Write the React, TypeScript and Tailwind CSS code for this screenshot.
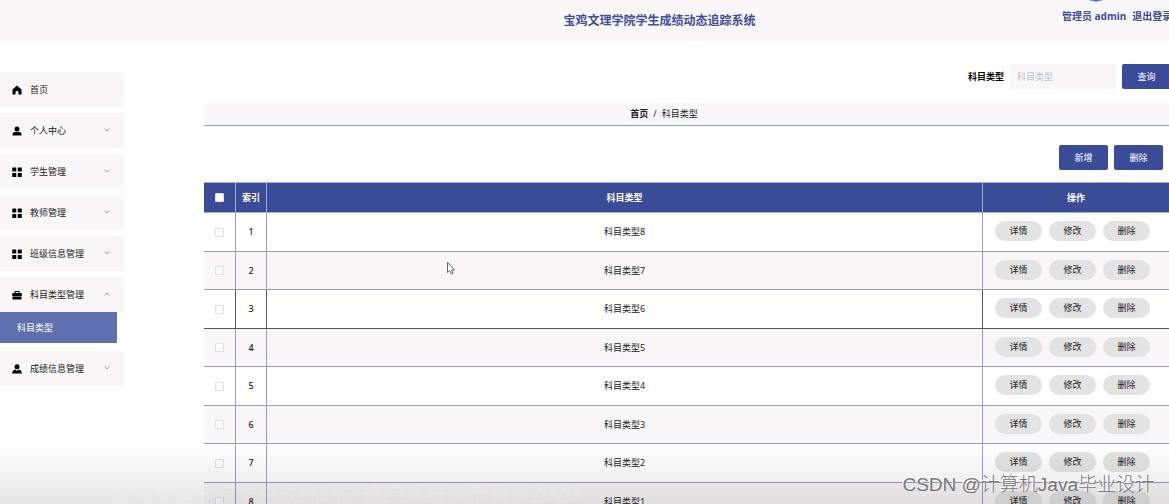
import React from "react";

const subjects = [8, 7, 6, 5, 4, 3, 2, 1];

type IconName = "home" | "user" | "grid" | "case" | "member";

const menu: { label: string; icon: IconName; open?: boolean; leaf?: boolean }[] = [
  { label: "首页", icon: "home", leaf: true },
  { label: "个人中心", icon: "user" },
  { label: "学生管理", icon: "grid" },
  { label: "教师管理", icon: "grid" },
  { label: "班级信息管理", icon: "grid" },
  { label: "科目类型管理", icon: "case", open: true },
  { label: "成绩信息管理", icon: "member" },
];

function MenuIcon({ name }: { name: IconName }) {
  return (
    <svg viewBox="0 0 20 20" className="size-[10px] shrink-0 fill-black" aria-hidden="true">
      {name === "home" && <path d="M10 1 L19 9 V19 H13 V14 Q13 12 10 12 Q7 12 7 14 V19 H1 V9 Z" />}
      {name === "user" && (
        <>
          <circle cx="10" cy="6" r="5" />
          <path d="M1 19 V16 Q1 12 6 12 H14 Q19 12 19 16 V19 Z" />
        </>
      )}
      {name === "grid" && (
        <>
          <rect x="0.500" y="1" width="8" height="8" rx="1" />
          <rect x="11.500" y="1" width="8" height="8" rx="1" />
          <rect x="0.500" y="12" width="8" height="8" rx="1" />
          <rect x="11.500" y="12" width="8" height="8" rx="1" />
        </>
      )}
      {name === "case" && (
        <>
          <path d="M5 6 V2 H15 V6 H19 L20 12 H0 L1 6 Z M7 4 V6 H13 V4 Z" fillRule="evenodd" />
          <path d="M1 13 H19 V19 H1 Z" />
        </>
      )}
      {name === "member" && (
        <>
          <circle cx="10" cy="5.500" r="5" />
          <path d="M0 19 L2 13 L7 11 L10 14 L13 11 L18 13 L20 19 Z" />
        </>
      )}
    </svg>
  );
}

function Chevron({ up }: { up?: boolean }) {
  return (
    <svg viewBox="0 0 8 8" className="mb-[2px] ml-auto size-[8px] fill-none stroke-[#909399]" aria-hidden="true">
      <path d={up ? "M1.500 5.500 L4 3 L6.500 5.500" : "M1.500 2.500 L4 5 L6.500 2.500"} strokeWidth="0.900" />
    </svg>
  );
}

function Sidebar() {
  return (
    <nav className="w-[124px] shrink-0 pt-[31px]">
      <ul className="flex flex-col gap-[6px]">
        {menu.map((m) => (
          <li key={m.label} className={m.open ? "pb-[2px]" : ""}>
            <a href="#" className="flex h-[35px] items-center bg-[#f8f6f7] pt-px pr-[13px] pl-[12px] text-[#222]">
              <MenuIcon name={m.icon} />
              <span className="ml-[8px]">{m.label}</span>
              {!m.leaf && <Chevron up={m.open} />}
            </a>
            {m.open && (
              <a href="#" className="mr-[7px] flex h-[31px] items-center bg-[#6070af] pl-[17px] text-white">
                科目类型
              </a>
            )}
          </li>
        ))}
      </ul>
    </nav>
  );
}

const solid = "h-[25px] w-[49px] shrink-0 rounded-[2px] bg-[#3a4b98] text-white";
const box = "block size-[9px] appearance-none rounded-[1px] border border-[#dcdfe6] bg-white";

function Records() {
  return (
    <table className="mt-[12px] w-full table-fixed border-separate border-spacing-0">
      <colgroup>
        <col className="w-[32px]" />
        <col className="w-[31px]" />
        <col />
        <col className="w-[186px]" />
      </colgroup>
      <thead>
        <tr className="h-[31px] bg-[#3a4b98] text-white [&>th]:border-t [&>th]:border-r [&>th]:border-b [&>th]:border-[#a3add6] [&>th:last-child]:border-r-0">
          <th className="p-0">
            <input type="checkbox" aria-label="全选" className={`${box} mx-auto`} />
          </th>
          <th className="p-0">索引</th>
          <th className="p-0">科目类型</th>
          <th className="p-0">操作</th>
        </tr>
      </thead>
      <tbody>
        {subjects.map((n, i) => (
          <tr
            key={n}
            className={`h-[39px] even:h-[38px] even:bg-[#f8f6f7] [&>td]:border-r [&>td]:border-b [&>td:last-child]:border-r-0 ${
              i === 2 ? "[&>td]:border-[#555]" : "[&>td]:border-[#9a9bba]"
            }`}
          >
            <td className="p-0">
              <input type="checkbox" aria-label={`选择科目类型${n}`} className={`${box} mx-auto`} />
            </td>
            <td className="p-0 text-center font-medium">{i + 1}</td>
            <td className="p-0 text-center">科目类型{n}</td>
            <td className="p-0 pl-[12px]">
              <div className="mb-[2px] flex gap-[7px]">
                {["详情", "修改", "删除"].map((t) => (
                  <button key={t} type="button" className="h-[20px] w-[47px] rounded-full bg-[#e3e3e3] text-[#222]">
                    {t}
                  </button>
                ))}
              </div>
            </td>
          </tr>
        ))}
      </tbody>
    </table>
  );
}

export default function App() {
  return (
    <div className="relative h-screen overflow-hidden bg-white font-['Noto_Sans','Noto_Sans_CJK_SC',sans-serif] text-[9px] leading-[12px] text-[#222]">
      <header className="relative flex h-[41px] items-center justify-center bg-[#f8f6f7] font-bold text-[#3f4f9b]">
        <h1 className="flex-1 pl-[150px] text-center text-[12px] leading-[16px]">宝鸡文理学院学生成绩动态追踪系统</h1>
        <div className="absolute top-0 left-full ml-[-107px] flex w-[120px] flex-col text-[10px] leading-[14px] whitespace-nowrap">
          <svg viewBox="0 0 20 3" className="ml-[24px] h-[2px] w-[20px]" aria-hidden="true">
            <path d="M0 0 H20 L17 1 L13 1 Q10 4 7 1 L3 1 Z" fill="#3267f5" />
          </svg>
          <div className="mt-[7px] flex gap-[6px]">
            <span>管理员 admin</span>
            <a href="#">退出登录</a>
          </div>
        </div>
      </header>

      <div className="flex">
        <Sidebar />
        <main className="ml-[80px] min-w-0 flex-1 pt-[23px]">
          <form className="mr-[-2px] flex items-center justify-end">
            <label htmlFor="kind" className="font-bold text-black">科目类型</label>
            <input
              id="kind"
              placeholder="科目类型"
              className="mr-[6px] ml-[6px] h-[25px] w-[106px] rounded-[2px] bg-[#f8f6f7] px-[7px] placeholder:text-[#c0c4cc]"
            />
            <button type="button" className={solid}>查询</button>
          </form>

          <div className="mt-[14px] flex h-[23px] items-center justify-center gap-[5px] border-b border-[#8f9dc6] bg-[#f8f6f7] pr-[45px]">
            <a href="#" className="font-bold">首页</a>
            <span>/</span>
            <span>科目类型</span>
          </div>

          <div className="mt-[19px] mr-[6px] flex justify-end gap-[6px]">
            <button type="button" className={solid}>新增</button>
            <button type="button" className={solid}>删除</button>
          </div>

          <Records />
        </main>
      </div>

      <svg viewBox="0 0 8 13" className="absolute top-[262px] left-[447px] h-[13px] w-[8px]" aria-hidden="true">
        <path d="M0.500 0.500 V10.500 L2.800 8.500 L4.300 12 L6 11.300 L4.600 8 H7.500 Z" fill="#fff" stroke="#444" strokeWidth="0.800" />
      </svg>

      <div className="pointer-events-none absolute inset-x-0 bottom-0 h-[60px] bg-linear-to-b from-black/0 to-black/10">
        <p className="pt-[38px] pl-[110px] text-[21px] leading-[24px] whitespace-nowrap text-white/10">
          宝鸡文理学院学生成绩动态追踪系统演示录像2020
        </p>
      </div>
      <p className="pointer-events-none absolute right-[15px] bottom-[6px] text-[19px] leading-[26px] font-light whitespace-nowrap text-[#777] font-['Liberation_Sans','Noto_Sans_CJK_SC',sans-serif] [text-shadow:-1px_-1px_0_#fff]">
        CSDN @计算机Java毕业设计
      </p>
    </div>
  );
}
